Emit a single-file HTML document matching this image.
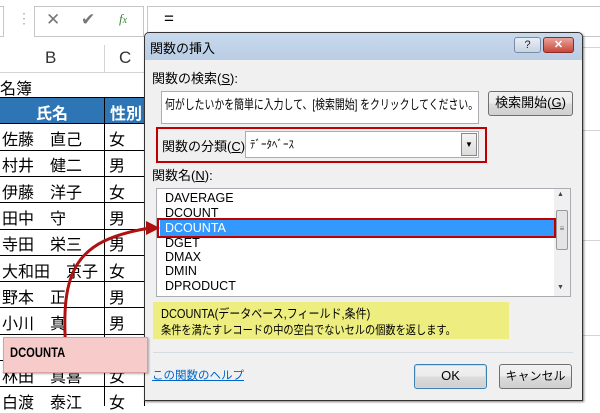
<!DOCTYPE html>
<html><head><meta charset="utf-8"><style>
*{margin:0;padding:0;box-sizing:border-box}
body{width:600px;height:406px;overflow:hidden;background:#fff;position:relative;font-family:"Liberation Sans","Noto Sans CJK JP",sans-serif;color:#000}
.a{position:absolute}
.t{position:absolute;white-space:nowrap}
.hl{position:absolute;height:1px;background:#000}
.vl{position:absolute;width:1px;background:#000}
.btn{position:absolute;border:1px solid #707070;border-radius:3px;background:linear-gradient(#f2f2f2,#ebebeb 50%,#dcdcdc 51%,#cfcfcf);font-size:13px;text-align:center}
</style></head><body>
<div class="a" style="left:0;top:0;width:600px;height:38px;background:#fff"></div>
<div class="a" style="left:0;top:6px;width:4px;height:31px;border:1px solid #c6c6c6;border-left:none"></div>
<div class="t" style="left:17px;top:10px;color:#aaa;font-size:14px">⋮</div>
<div class="a" style="left:34px;top:6px;width:110px;height:31px;border:1px solid #c6c6c6"></div>
<div class="t" style="left:46px;top:10px;color:#777;font-size:17px">✕</div>
<div class="t" style="left:81px;top:10px;color:#777;font-size:17px">✔</div>
<div class="t" style="left:119px;top:11px;color:#3a8a3a;font-size:13px;font-style:italic;font-family:'Liberation Serif',serif">f<span style="font-size:10px">x</span></div>
<div class="a" style="left:147px;top:6px;width:460px;height:31px;border:1px solid #c6c6c6"></div>
<div class="t" style="left:164px;top:9px;font-size:17px">=</div>
<div class="a" style="left:0;top:40px;width:160px;height:33px;background:#fff;border-bottom:1px solid #d4d4d4"></div>
<div class="a" style="left:104px;top:45px;width:1px;height:27px;background:#d4d4d4"></div>
<div class="t" style="left:45px;top:48px;font-size:17px;color:#333">B</div>
<div class="t" style="left:119px;top:48px;font-size:17px;color:#333">C</div>
<div class="t" style="left:0;top:75px;font-size:16px">名簿</div>
<div class="a" style="left:0;top:98px;width:145px;height:25px;background:#2e75b6"></div>
<div class="t" style="left:36px;top:100px;font-size:16px;color:#fff;font-weight:bold">氏名</div>
<div class="t" style="left:110px;top:100px;font-size:16px;color:#fff;font-weight:bold">性別</div>
<div class="vl" style="left:104px;top:98px;height:308px"></div>
<div class="vl" style="left:144px;top:98px;height:308px"></div>
<div class="hl" style="left:0;top:97px;width:145px"></div>
<div class="hl" style="left:0;top:123px;width:145px"></div>
<div class="hl" style="left:0;top:150px;width:145px"></div>
<div class="hl" style="left:0;top:176px;width:145px"></div>
<div class="hl" style="left:0;top:202px;width:145px"></div>
<div class="hl" style="left:0;top:229px;width:145px"></div>
<div class="hl" style="left:0;top:255px;width:145px"></div>
<div class="hl" style="left:0;top:281px;width:145px"></div>
<div class="hl" style="left:0;top:307px;width:145px"></div>
<div class="hl" style="left:0;top:334px;width:145px"></div>
<div class="hl" style="left:0;top:360px;width:145px"></div>
<div class="hl" style="left:0;top:386px;width:145px"></div>
<div style="font-size:16px">
<div class="t" style="left:2px;top:126px">佐藤　直己</div><div class="t" style="left:109px;top:126px">女</div>
<div class="t" style="left:2px;top:152px">村井　健二</div><div class="t" style="left:109px;top:152px">男</div>
<div class="t" style="left:2px;top:179px">伊藤　洋子</div><div class="t" style="left:109px;top:179px">女</div>
<div class="t" style="left:2px;top:205px">田中　守</div><div class="t" style="left:109px;top:205px">男</div>
<div class="t" style="left:2px;top:231px">寺田　栄三</div><div class="t" style="left:109px;top:231px">男</div>
<div class="t" style="left:2px;top:258px">大和田　京子</div><div class="t" style="left:109px;top:258px">女</div>
<div class="t" style="left:2px;top:284px">野本　正</div><div class="t" style="left:109px;top:284px">男</div>
<div class="t" style="left:2px;top:310px">小川　真</div><div class="t" style="left:109px;top:310px">男</div>
<div class="t" style="left:2px;top:363px">林田　真喜</div><div class="t" style="left:109px;top:363px">女</div>
<div class="t" style="left:2px;top:389px">白渡　泰江</div><div class="t" style="left:109px;top:389px">女</div>
</div>
<div class="hl" style="left:582px;top:47px;width:18px;background:#d4d4d4"></div>
<div class="hl" style="left:582px;top:130px;width:18px;background:#d4d4d4"></div>
<div class="hl" style="left:582px;top:240px;width:18px;background:#d4d4d4"></div>
<div class="hl" style="left:582px;top:335px;width:18px;background:#d4d4d4"></div>
<div class="a" style="left:144px;top:32px;width:439px;height:369px;background:#f0f0f0;border:1px solid #333;border-radius:5px 5px 0 0;box-shadow:1px 1px 2px rgba(0,0,0,.5)"></div>
<div class="a" style="left:145px;top:33px;width:437px;height:27px;background:linear-gradient(#c8d9ec,#b9cde4);border-radius:5px 5px 0 0"></div>
<div class="t" style="left:150px;top:38px;font-size:13px">関数の挿入</div>
<div class="a" style="left:514px;top:37px;width:27px;height:16px;border:1px solid #7a8ca3;border-radius:3px;background:linear-gradient(#e8eef6,#c8d4e2);font-size:11px;text-align:center;line-height:14px;color:#222">?</div>
<div class="a" style="left:543px;top:37px;width:31px;height:16px;border:1px solid #8a2a22;border-radius:3px;background:linear-gradient(#e9a49a,#c8473a);font-size:11px;font-weight:bold;text-align:center;line-height:14px;color:#fff">✕</div>
<div class="t" style="left:152px;top:68px;font-size:13px">関数の検索(<u>S</u>):</div>
<div class="a" style="left:161px;top:91px;width:318px;height:33px;background:#fff;border:1px solid #abadb3"></div>
<div class="t" style="left:165px;top:94px;font-size:13px;transform:scaleX(0.76);transform-origin:0 0">何がしたいかを簡単に入力して、[検索開始] をクリックしてください。</div>
<div class="btn" style="left:488px;top:91px;width:85px;height:25px;line-height:22px">検索開始(<u>G</u>)</div>
<div class="a" style="left:156px;top:127px;width:331px;height:36px;border:2px solid #c00000"></div>
<div class="t" style="left:162px;top:136px;font-size:13px">関数の分類(<u>C</u>):</div>
<div class="a" style="left:245px;top:131px;width:234px;height:27px;background:#fff;border:1px solid #abadb3"></div>
<div class="t" style="left:250px;top:136px;font-size:11px">ﾃﾞｰﾀﾍﾞｰｽ</div>
<div class="a" style="left:461px;top:133px;width:16px;height:23px;border:1px solid #888;background:linear-gradient(#f4f4f4,#dcdcdc);font-size:8px;text-align:center;line-height:21px">▼</div>
<div class="t" style="left:152px;top:165px;font-size:13px">関数名(<u>N</u>):</div>
<div class="a" style="left:156px;top:188px;width:415px;height:109px;background:#fff;border:1px solid #abadb3"></div>
<div class="a" style="left:554px;top:189px;width:16px;height:107px;background:#f0f0f0"></div>
<div class="a" style="left:556px;top:210px;width:12px;height:40px;border:1px solid #999;border-radius:2px;background:#e4e4e4;font-size:8px;text-align:center;line-height:36px;color:#666">≡</div>
<div class="t" style="left:557px;top:191px;font-size:7px;color:#444">▲</div>
<div class="t" style="left:557px;top:284px;font-size:7px;color:#444">▼</div>
<div class="a" style="left:160px;top:220px;width:394px;height:16px;background:#3399ff"></div>
<div class="a" style="left:157px;top:218px;width:399px;height:20px;border:2px solid #c00000"></div>
<div style="font-size:12.5px">
<div class="t" style="left:165px;top:191px">DAVERAGE</div>
<div class="t" style="left:165px;top:206px">DCOUNT</div>
<div class="t" style="left:165px;top:221px;color:#fff">DCOUNTA</div>
<div class="t" style="left:165px;top:236px">DGET</div>
<div class="t" style="left:165px;top:250px">DMAX</div>
<div class="t" style="left:165px;top:264px">DMIN</div>
<div class="t" style="left:165px;top:279px">DPRODUCT</div>
</div>
<div class="a" style="left:153px;top:302px;width:356px;height:37px;background:#eeee80"></div>
<div class="t" style="left:161px;top:303px;font-size:12.5px;transform:scaleX(0.88);transform-origin:0 0">DCOUNTA(データベース,フィールド,条件)</div>
<div class="t" style="left:161px;top:321px;font-size:12px;transform:scaleX(0.85);transform-origin:0 0">条件を満たすレコードの中の空白でないセルの個数を返します。</div>
<div class="hl" style="left:153px;top:352px;width:420px;background:#d5dbe3"></div>
<div class="t" style="left:152px;top:367px;font-size:11.5px;color:#0066cc;text-decoration:underline">この関数のヘルプ</div>
<div class="btn" style="left:414px;top:364px;width:73px;height:25px;line-height:22px;border-color:#3c7fb1;box-shadow:inset 0 0 0 1px #b8e0f8">OK</div>
<div class="btn" style="left:499px;top:364px;width:73px;height:25px;line-height:22px;font-size:12px">キャンセル</div>
<svg class="a" style="left:0;top:0" width="600" height="406">
<path d="M66 352 C60 270 75 240 150 228" fill="none" stroke="#b01010" stroke-width="3"/>
<path d="M146 221 L160 228 L146 235 Z" fill="#b01010"/>
</svg>
<div class="a" style="left:3px;top:337px;width:145px;height:36px;background:#f8cbcb;border:1px solid #d9a0a0;box-shadow:1px 1px 2px rgba(0,0,0,.3)"></div>
<div class="t" style="left:10px;top:344px;font-size:14px;font-weight:bold;transform:scaleX(0.8);transform-origin:0 0">DCOUNTA</div>
</body></html>
